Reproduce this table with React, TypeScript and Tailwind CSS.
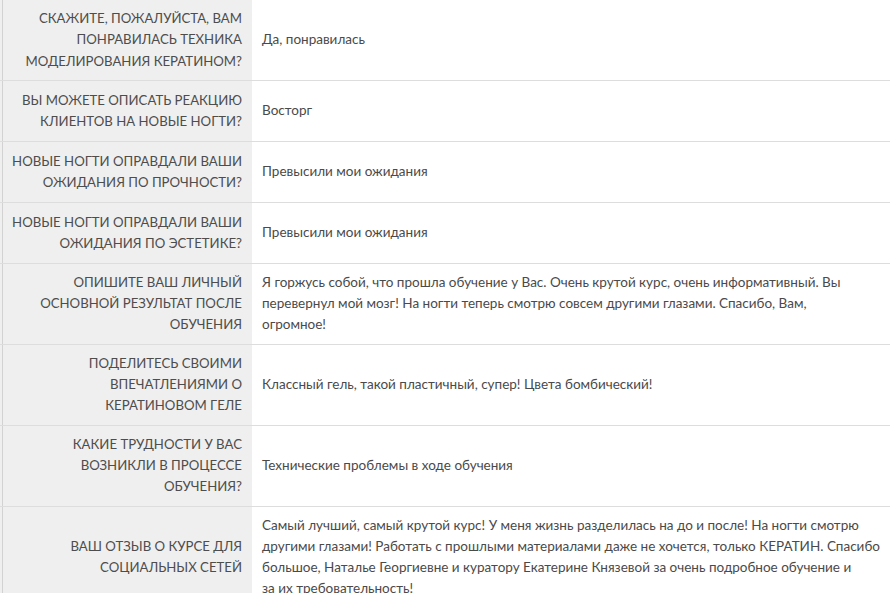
const rows: { q: string; a: string }[] = [
  {
    q: 'Скажите, пожалуйста, вам понравилась техника моделирования кератином?',
    a: 'Да, понравилась',
  },
  { q: 'Вы можете описать реакцию клиентов на новые ногти?', a: 'Восторг' },
  { q: 'Новые ногти оправдали ваши ожидания по прочности?', a: 'Превысили мои ожидания' },
  { q: 'Новые ногти оправдали ваши ожидания по эстетике?', a: 'Превысили мои ожидания' },
  {
    q: 'Опишите ваш личный основной результат после обучения',
    a: 'Я горжусь собой, что прошла обучение у Вас. Очень крутой курс, очень информативный. Вы перевернул мой мозг! На ногти теперь смотрю совсем другими глазами. Спасибо, Вам,\nогромное!',
  },
  {
    q: 'Поделитесь своими впечатлениями о кератиновом геле',
    a: 'Классный гель, такой пластичный, супер! Цвета бомбический!',
  },
  {
    q: 'Какие трудности у вас возникли в процессе обучения?',
    a: 'Технические проблемы в ходе обучения',
  },
  {
    q: 'Ваш отзыв о курсе для социальных сетей',
    a: 'Самый лучший, самый крутой курс! У меня жизнь разделилась на до и после! На ногти смотрю другими глазами! Работать с прошлыми материалами даже не хочется, только КЕРАТИН. Спасибо большое, Наталье Георгиевне и куратору Екатерине Князевой за очень подробное обучение и\nза их требовательность!',
  },
];

export default function App() {
  return (
    <div className="w-[890px] h-[593px] overflow-hidden bg-white font-['Lato','Liberation_Sans',sans-serif] text-[13.5px] leading-[21.3px] text-[#4a4a4a]">
      {rows.map((row, i) => (
        <div key={i} className="flex min-h-[61px] bg-[#efefef] border-b border-[#dddddd]">
          <div className="ml-[2px] w-[250px] shrink-0 border-l border-[#d2d2d2] py-2 pl-[6px] pr-[10px] flex items-center justify-end text-right uppercase text-[13.2px] text-[#4d4d4d]">
            <span>{row.q}</span>
          </div>
          <div className="flex-1 bg-white py-2 pl-[10px] pr-[8px] flex items-center whitespace-pre-line">
            <span>{row.a}</span>
          </div>
        </div>
      ))}
    </div>
  );
}
